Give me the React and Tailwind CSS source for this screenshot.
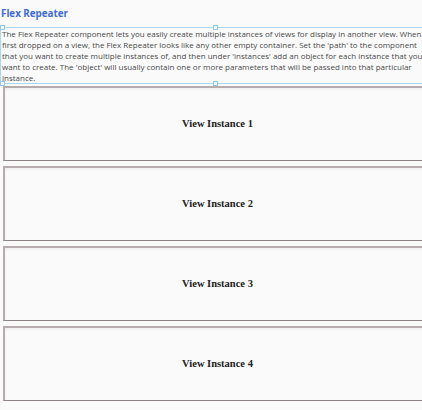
import React from "react";

const lines = [
  "The Flex Repeater component lets you easily create multiple instances of views for display in another view. When",
  "first dropped on a view, the Flex Repeater looks like any other empty container. Set the 'path' to the component",
  "that you want to create multiple instances of, and then under 'instances' add an object for each instance that you",
  "want to create. The 'object' will usually contain one or more parameters that will be passed into that particular",
  "instance.",
];

function Handle({ className }) {
  return (
    <div
      className={
        "absolute w-[5px] h-[5px] bg-white border border-[#8ccbe8] " + className
      }
    />
  );
}

function Instance({ n }) {
  return (
    <div className="h-[75px] ml-[3px] w-[427px] border-t-2 border-l-2 border-b border-t-[#b4acad] border-l-[#b4acad] border-b-[#8a8283] bg-[#fafafa] shadow-[inset_0_2px_3px_rgba(0,0,0,0.04)] flex items-center justify-center">
      <span className="font-['Liberation_Serif',serif] font-bold text-[10.5px] text-[#222]">
        View Instance {n}
      </span>
    </div>
  );
}

export default function App() {
  return (
    <div className="w-full h-[410px] overflow-hidden bg-[#fafafa]">
      <div className="w-[432px] font-['Open_Sans',sans-serif]">
        <div className="h-[27px] pl-px pt-[7px]">
          <div className="text-[9.8px] leading-[14px] font-bold text-[#3f6cd6]">
            Flex Repeater
          </div>
        </div>
        <div className="relative border border-[#a6d8ee] h-[57px]">
          <div className="pl-px text-[8px] leading-[11px] text-[#4a4a4a]">
            {lines.map((l, i) => (
              <div key={i} className="whitespace-nowrap">
                {l}
              </div>
            ))}
          </div>
          <Handle className="-top-[3px] -left-[1px]" />
          <Handle className="-top-[3px] left-[212px]" />
          <Handle className="-bottom-[3px] -left-[1px]" />
          <Handle className="-bottom-[3px] left-[212px]" />
        </div>
        <div className="mt-[2px] flex flex-col gap-[5px]">
          <Instance n={1} />
          <Instance n={2} />
          <Instance n={3} />
          <Instance n={4} />
        </div>
      </div>
    </div>
  );
}
